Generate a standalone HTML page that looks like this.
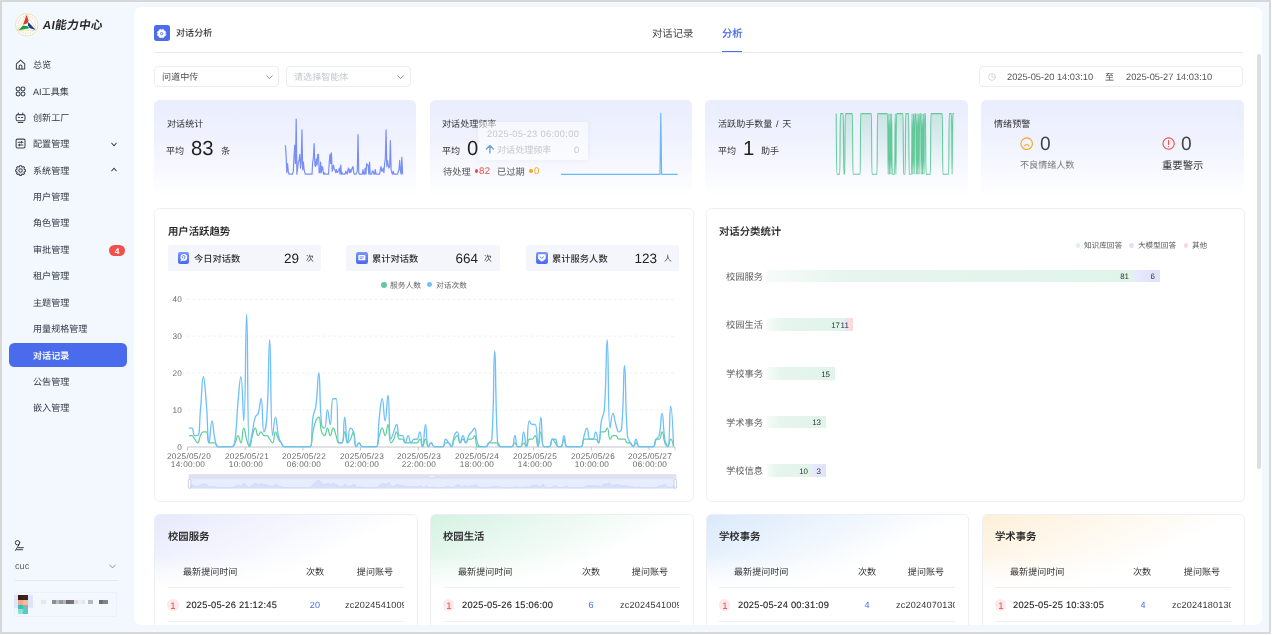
<!DOCTYPE html>
<html lang="zh-CN"><head><meta charset="utf-8"><title>AI能力中心 - 对话分析</title>
<style>
*{box-sizing:border-box;margin:0;padding:0}
html,body{width:1272px;height:635px;overflow:hidden;background:#f3f7fe}
body{font-family:"Liberation Sans","Noto Sans CJK SC",sans-serif;color:#333;position:relative}
.abs,.t{position:absolute}
.t{white-space:nowrap;line-height:20px;height:20px;font-size:9.275px;color:#333;transform:matrix(1,0.001,0,1,0,0)}
.cj{font-family:"Liberation Sans","Noto Sans CJK SC",sans-serif}
.b{font-weight:bold}
.sb{font-weight:500;-webkit-text-stroke:.1px currentColor}
.m{font-weight:500}
svg{position:absolute;overflow:visible}
</style></head>
<body>
<div id="app" style="position:absolute;left:0;top:0;width:1272px;height:635px;will-change:transform;transform:translateZ(0)">
<svg style="left:14.6px;top:12.9px" width="23.6" height="23.6" viewBox="0 0 48 48">
<circle cx="24" cy="24" r="22.8" fill="#fffefa" stroke="#ead9a0" stroke-width="1.6"/>
<circle cx="24" cy="24" r="17.8" fill="none" stroke="#c9c9cf" stroke-width="3" stroke-dasharray="1.5 2.3" opacity=".75"/>
<circle cx="24" cy="24" r="14.6" fill="#fffefa"/>
<path d="M24 2 L4.5 35.5 L43.5 35 Z" fill="none" stroke="#e6cf86" stroke-width="1.1"/>
<g transform="translate(24 24) scale(1.14) translate(-24 -25)">
<path d="M23.6 7.5 L17.2 25 L25.4 22.4 L27 17 Z" fill="#dc3a2b"/>
<path d="M26.6 20 L39.5 33.8 L29.4 31.2 L26 26 Z" fill="#123f93"/>
<path d="M9.5 34.6 L28.6 31.2 L25.5 27.4 L16.8 26.4 Z" fill="#1e9a3c"/>
</g>
</svg>
<div class="t cj" style="top:15.09px;font-size:11.638px;left:43.20px;font-weight:700;letter-spacing:.3px;transform:matrix(1,0.001,-0.17,1,0,0);color:#2b2b2b;">AI能力中心</div>
<svg style="left:14.9px;top:59.35px" width="11.1" height="11.1" viewBox="0 0 16 16" fill="none" stroke="#3d4452" stroke-width="1.5" stroke-linecap="round" stroke-linejoin="round"><path d="M2 6.9 L8 1.5 L14 6.9 V14.3 H2 Z"/><path d="M6 14.3 V10.6 a2 2 0 0 1 4 0 V14.3"/></svg>
<svg style="left:14.9px;top:85.55px" width="11.1" height="11.1" viewBox="0 0 16 16" fill="none" stroke="#3d4452" stroke-width="1.5" stroke-linecap="round" stroke-linejoin="round"><circle cx="4.5" cy="4.4" r="2.85"/><circle cx="11.5" cy="4.4" r="2.85"/><circle cx="4.5" cy="11.6" r="2.85"/><circle cx="11.5" cy="11.6" r="2.85"/></svg>
<svg style="left:14.9px;top:112.15px" width="11.1" height="11.1" viewBox="0 0 16 16" fill="none" stroke="#3d4452" stroke-width="1.5" stroke-linecap="round" stroke-linejoin="round"><rect x="1.6" y="3.8" width="12.8" height="8.8" rx="2.2"/><path d="M4.8 1.4 V3.6 M11.2 1.4 V3.6 M4.6 15 H11.4 M4.9 7.9 H6.7 M9.3 7.9 H11.1"/></svg>
<svg style="left:14.9px;top:138.45px" width="11.1" height="11.1" viewBox="0 0 16 16" fill="none" stroke="#3d4452" stroke-width="1.5" stroke-linecap="round" stroke-linejoin="round"><rect x="1.6" y="1.6" width="12.8" height="12.8" rx="1.8"/><path d="M4.6 6 H11.4 M4.6 10 H11.4" /><path d="M9.4 4.7 V7.3 M6.6 8.7 V11.3"/></svg>
<svg style="left:14.9px;top:164.55px" width="11.1" height="11.1" viewBox="0 0 16 16" fill="none" stroke="#3d4452" stroke-width="1.5" stroke-linecap="round" stroke-linejoin="round"><path d="M14.99 6.77 L14.99 9.23 L13.36 9.64 L12.94 10.63 L13.82 12.07 L12.07 13.82 L10.63 12.94 L9.64 13.36 L9.23 14.99 L6.77 14.99 L6.36 13.36 L5.37 12.94 L3.93 13.82 L2.18 12.07 L3.06 10.63 L2.64 9.64 L1.01 9.23 L1.01 6.77 L2.64 6.36 L3.06 5.37 L2.18 3.93 L3.93 2.18 L5.37 3.06 L6.36 2.64 L6.77 1.01 L9.23 1.01 L9.64 2.64 L10.63 3.06 L12.07 2.18 L13.82 3.93 L12.94 5.37 L13.36 6.36 Z" stroke-width="1.5"/><circle cx="8" cy="8" r="2.5" stroke-width="1.5"/></svg>
<div class="t cj" style="top:55.10px;font-size:9.071px;left:32.80px;color:#333a46;">总览</div>
<div class="t cj" style="top:81.63px;font-size:9.071px;left:32.80px;color:#333a46;">AI工具集</div>
<div class="t cj" style="top:107.88px;font-size:9.071px;left:32.80px;color:#333a46;">创新工厂</div>
<div class="t cj" style="top:134.42px;font-size:9.071px;left:32.80px;color:#333a46;">配置管理</div>
<div class="t cj" style="top:160.57px;font-size:9.071px;left:32.80px;color:#333a46;">系统管理</div>
<svg style="left:111.3px;top:141.6px" width="6" height="5" viewBox="0 0 12 10" fill="none" stroke="#333" stroke-width="2.1" stroke-linecap="round" stroke-linejoin="round"><path d="M1.5 2.5 L6 7.5 L10.5 2.5"/></svg>
<svg style="left:111.3px;top:167.4px" width="6" height="5" viewBox="0 0 12 10" fill="none" stroke="#333" stroke-width="2.1" stroke-linecap="round" stroke-linejoin="round"><path d="M1.5 7.5 L6 2.5 L10.5 7.5"/></svg>
<div class="abs" style="left:8.50px;top:342.90px;width:118.80px;height:24.20px;background:#4a6cec;border-radius:5.3px"></div>
<div class="t cj" style="top:186.99px;font-size:9.071px;left:32.80px;color:#333a46;">用户管理</div>
<div class="t cj" style="top:213.41px;font-size:9.071px;left:32.80px;color:#333a46;">角色管理</div>
<div class="t cj" style="top:239.86px;font-size:9.071px;left:32.80px;color:#333a46;">审批管理</div>
<div class="t cj" style="top:266.22px;font-size:9.071px;left:32.80px;color:#333a46;">租户管理</div>
<div class="t cj" style="top:292.67px;font-size:9.071px;left:32.80px;color:#333a46;">主题管理</div>
<div class="t cj" style="top:319.05px;font-size:9.071px;left:32.80px;color:#333a46;">用量规格管理</div>
<div class="t cj sb" style="top:345.52px;font-size:9.071px;left:32.80px;color:#fff;">对话记录</div>
<div class="t cj" style="top:371.85px;font-size:9.071px;left:32.80px;color:#333a46;">公告管理</div>
<div class="t cj" style="top:398.24px;font-size:9.071px;left:32.80px;color:#333a46;">嵌入管理</div>
<div class="abs" style="left:109.00px;top:245.30px;width:16.40px;height:10.70px;background:#f0514a;border-radius:5.4px"></div>
<div class="t b" style="top:240.70px;font-size:8.400px;left:17.20px;width:200px;text-align:center;color:#fff;">4</div>
<svg style="left:0;top:0" width="140" height="635" fill="none" stroke="#333" stroke-width="0.95" stroke-linecap="round"><circle cx="17.5" cy="542.7" r="2.2"/><path d="M19.1 544.5 L15.5 550.4 M18.4 547.7 H23.4 M16.8 549.7 H22.6"/></svg>
<div class="t " style="top:556.19px;font-size:9.200px;left:15.30px;color:#666;">cuc</div>
<svg style="left:109px;top:564.2px" width="7" height="5" viewBox="0 0 14 10" fill="none" stroke="#777" stroke-width="1.5" stroke-linecap="round" stroke-linejoin="round"><path d="M1.5 2 L7 8 L12.5 2"/></svg>
<div class="abs" style="left:15.20px;top:580.20px;width:103.00px;height:0.70px;background:#e3e7f0"></div>
<div class="abs" style="left:14.00px;top:592.20px;width:103.30px;height:24.40px;border:0.9px solid #edf1fa;border-radius:2px"></div>
<div class="abs" style="left:14.00px;top:595.20px;width:19.00px;height:13.00px;background:#dfe5fb"></div>
<div class="abs" style="left:17.90px;top:595.20px;width:5.10px;height:4.75px;background:#3a1d15"></div>
<div class="abs" style="left:22.90px;top:595.20px;width:5.10px;height:4.75px;background:#43211a"></div>
<div class="abs" style="left:17.90px;top:599.85px;width:5.10px;height:4.75px;background:#f0a58c"></div>
<div class="abs" style="left:22.90px;top:599.85px;width:5.10px;height:4.75px;background:#f6b9a0"></div>
<div class="abs" style="left:17.90px;top:604.50px;width:5.10px;height:4.75px;background:#2ec4bd"></div>
<div class="abs" style="left:22.90px;top:604.50px;width:5.10px;height:4.75px;background:#8fb5a2"></div>
<div class="abs" style="left:17.90px;top:609.15px;width:5.10px;height:4.75px;background:#93ddd8"></div>
<div class="abs" style="left:22.90px;top:609.15px;width:5.10px;height:4.75px;background:#4dcfc8"></div>
<div class="abs" style="left:41.00px;top:600.00px;width:5.00px;height:4.20px;background:#e6e8ee"></div>
<div class="abs" style="left:52.00px;top:600.00px;width:3.50px;height:4.20px;background:#8e8e90"></div>
<div class="abs" style="left:55.50px;top:600.00px;width:3.50px;height:4.20px;background:#b9b9bb"></div>
<div class="abs" style="left:59.00px;top:600.00px;width:3.50px;height:4.20px;background:#9a9a9c"></div>
<div class="abs" style="left:62.50px;top:600.00px;width:3.00px;height:4.20px;background:#b5b5b7"></div>
<div class="abs" style="left:65.50px;top:600.00px;width:4.50px;height:4.20px;background:#6e6e70"></div>
<div class="abs" style="left:70.00px;top:600.00px;width:3.50px;height:4.20px;background:#77777a"></div>
<div class="abs" style="left:73.50px;top:600.00px;width:4.00px;height:4.20px;background:#dcdde2"></div>
<div class="abs" style="left:78.00px;top:600.00px;width:4.00px;height:4.20px;background:#eceef3"></div>
<div class="abs" style="left:82.00px;top:600.00px;width:3.00px;height:4.20px;background:#e3e5ea"></div>
<div class="abs" style="left:88.00px;top:600.00px;width:5.00px;height:4.20px;background:#b8b9bd"></div>
<div class="abs" style="left:98.50px;top:600.00px;width:4.00px;height:4.20px;background:#6f6f72"></div>
<div class="abs" style="left:102.50px;top:600.00px;width:5.00px;height:4.20px;background:#858588"></div>
<div class="abs" style="left:133.60px;top:6.60px;width:1128.40px;height:618.50px;background:#fff;border-radius:7px"></div>
<div class="abs" style="left:153.90px;top:25.00px;width:15.80px;height:15.80px;background:#4c6cec;border-radius:2.7px"></div>
<svg style="left:157.1px;top:28.9px" width="9.2" height="9.2" viewBox="0 0 16 16"><path d="M15.35 9.50 L14.25 12.14 L13.02 12.13 L12.13 13.02 L12.14 14.25 L9.50 15.35 L8.62 14.47 L7.38 14.47 L6.50 15.35 L3.86 14.25 L3.87 13.02 L2.98 12.13 L1.75 12.14 L0.65 9.50 L1.53 8.62 L1.53 7.38 L0.65 6.50 L1.75 3.86 L2.98 3.87 L3.87 2.98 L3.86 1.75 L6.50 0.65 L7.38 1.53 L8.62 1.53 L9.50 0.65 L12.14 1.75 L12.13 2.98 L13.02 3.87 L14.25 3.86 L15.35 6.50 L14.47 7.38 L14.47 8.62 Z" fill="#fff" stroke="#fff" stroke-width="1.2" stroke-linejoin="round"/><circle cx="8" cy="8" r="2.1" fill="none" stroke="#4c6cec" stroke-width="1.5"/></svg>
<div class="t cj m" style="top:23.36px;font-size:9.071px;left:176.15px;color:#333;">对话分析</div>
<div class="t cj" style="top:23.74px;font-size:10.367px;left:651.99px;color:#444;">对话记录</div>
<div class="t cj sb" style="top:24.02px;font-size:10.367px;left:721.69px;color:#4c6cec;">分析</div>
<div class="abs" style="left:721.60px;top:51.40px;width:20.60px;height:1.40px;background:#4c6cec"></div>
<div class="abs" style="left:153.80px;top:52.00px;width:1089.00px;height:0.90px;background:#e8eaef"></div>
<div class="abs" style="left:154.20px;top:66.40px;width:124.40px;height:20.20px;border:0.8px solid #ecedf1;border-radius:4px;background:#fff"></div>
<div class="t cj" style="top:66.92px;font-size:9.071px;left:162.43px;color:#4c4c4c;">问道中传</div>
<svg style="left:265.6px;top:74.6px" width="7" height="4.6" viewBox="0 0 14 9" fill="none" stroke="#74777f" stroke-width="1.7" stroke-linecap="round" stroke-linejoin="round"><path d="M1.5 1.5 L7 7.2 L12.5 1.5"/></svg>
<div class="abs" style="left:285.80px;top:66.40px;width:124.80px;height:20.20px;border:0.8px solid #ecedf1;border-radius:4px;background:#fff"></div>
<div class="t cj" style="top:66.84px;font-size:9.071px;left:293.79px;color:#c4c7ce;">请选择智能体</div>
<svg style="left:397.4px;top:74.6px" width="7" height="4.6" viewBox="0 0 14 9" fill="none" stroke="#74777f" stroke-width="1.7" stroke-linecap="round" stroke-linejoin="round"><path d="M1.5 1.5 L7 7.2 L12.5 1.5"/></svg>
<div class="abs" style="left:979.00px;top:66.20px;width:264.40px;height:20.40px;border:0.8px solid #ecedf1;border-radius:4px;background:#fff"></div>
<svg style="left:987.6px;top:72.8px" width="8" height="8" viewBox="0 0 16 16" fill="none" stroke="#c3c6cd" stroke-width="1.4" stroke-linecap="round"><circle cx="8" cy="8" r="6.8"/><path d="M8 4.2 V8.2 H11"/></svg>
<div class="t " style="top:67.21px;font-size:9.275px;left:1006.74px;color:#555;">2025-05-20 14:03:10</div>
<div class="t cj" style="top:66.60px;font-size:9.071px;left:1104.66px;color:#444;">至</div>
<div class="t " style="top:67.22px;font-size:9.275px;left:1125.74px;color:#555;">2025-05-27 14:03:10</div>
<div class="abs" style="left:153.90px;top:100.00px;width:262.60px;height:96.00px;background:linear-gradient(180deg,#e9edfd 0%,#eff2fe 38%,#f8f9ff 74%,#ffffff 100%);border-radius:5.3px"></div>
<div class="abs" style="left:429.60px;top:100.00px;width:262.60px;height:96.00px;background:linear-gradient(180deg,#e9edfd 0%,#eff2fe 38%,#f8f9ff 74%,#ffffff 100%);border-radius:5.3px"></div>
<div class="abs" style="left:705.40px;top:100.00px;width:262.60px;height:96.00px;background:linear-gradient(180deg,#e9edfd 0%,#eff2fe 38%,#f8f9ff 74%,#ffffff 100%);border-radius:5.3px"></div>
<div class="abs" style="left:981.20px;top:100.00px;width:262.60px;height:96.00px;background:linear-gradient(180deg,#e9edfd 0%,#eff2fe 38%,#f8f9ff 74%,#ffffff 100%);border-radius:5.3px"></div>
<div class="t cj" style="top:114.04px;font-size:9.071px;left:166.65px;color:#333;">对话统计</div>
<div class="t cj" style="top:140.70px;font-size:9.071px;left:166.47px;color:#333;">平均</div>
<div class="t " style="top:137.99px;font-size:20.300px;left:191.30px;letter-spacing:-.1px;color:#1f1f1f;">83</div>
<div class="t cj" style="top:140.96px;font-size:9.071px;left:220.51px;color:#333;">条</div>
<svg style="left:0;top:0" width="1272" height="635"><path d="M285.40 145.17L286.12 155.87L286.84 172.67L287.56 163.51L288.28 171.14L289.00 174.20L289.71 174.20L290.43 174.20L291.15 174.20L291.87 174.20L292.59 174.20L293.31 171.14L294.03 155.87L294.75 145.17L295.47 163.51L296.19 119.20L296.90 174.20L297.62 168.09L298.34 161.98L299.06 160.45L299.78 154.34L300.50 168.09L301.22 161.98L301.94 129.89L302.66 169.62L303.38 161.98L304.09 169.62L304.81 172.67L305.53 174.20L306.25 174.20L306.97 174.20L307.69 174.20L308.41 174.20L309.13 174.20L309.85 174.20L310.57 174.20L311.28 174.20L312.00 174.20L312.72 161.98L313.44 157.39L314.16 143.64L314.88 165.03L315.60 166.56L316.32 158.92L317.04 165.03L317.76 154.34L318.47 154.34L319.19 172.67L319.91 172.67L320.63 161.98L321.35 172.67L322.07 166.56L322.79 168.09L323.51 174.20L324.23 172.67L324.95 174.20L325.67 174.20L326.38 174.20L327.10 174.20L327.82 174.20L328.54 174.20L329.26 161.98L329.98 154.34L330.70 163.51L331.42 152.81L332.14 171.14L332.86 168.09L333.57 165.03L334.29 169.62L335.01 169.62L335.73 172.67L336.45 169.62L337.17 172.67L337.89 171.14L338.61 171.14L339.33 168.09L340.05 174.20L340.76 165.03L341.48 174.20L342.20 172.67L342.92 174.20L343.64 174.20L344.36 174.20L345.08 174.20L345.80 171.14L346.52 172.67L347.24 174.20L347.95 169.62L348.67 168.09L349.39 172.67L350.11 169.62L350.83 172.67L351.55 169.62L352.27 168.09L352.99 166.56L353.71 172.67L354.43 174.20L355.14 174.20L355.86 174.20L356.58 172.67L357.30 171.14L358.02 134.48L358.74 172.67L359.46 174.20L360.18 174.20L360.90 174.20L361.62 174.20L362.33 174.20L363.05 169.62L363.77 174.20L364.49 174.20L365.21 168.09L365.93 174.20L366.65 163.51L367.37 165.03L368.09 165.03L368.81 174.20L369.53 161.98L370.24 174.20L370.96 174.20L371.68 174.20L372.40 171.14L373.12 171.14L373.84 174.20L374.56 174.20L375.28 169.62L376.00 174.20L376.72 174.20L377.43 174.20L378.15 174.20L378.87 174.20L379.59 174.20L380.31 169.62L381.03 166.56L381.75 171.14L382.47 171.14L383.19 168.09L383.91 172.67L384.62 163.51L385.34 158.92L386.06 129.89L386.78 166.56L387.50 160.45L388.22 165.03L388.94 168.09L389.66 166.56L390.38 140.59L391.10 169.62L391.81 172.67L392.53 174.20L393.25 171.14L393.97 174.20L394.69 174.20L395.41 174.20L396.13 174.20L396.85 174.20L397.57 174.20L398.29 171.14L399.00 169.62L399.72 160.45L400.44 171.14L401.16 174.20L401.88 157.39L402.60 174.20" fill="none" stroke="#788ef5" stroke-width="1.2" stroke-linejoin="round"/></svg>
<div class="t cj" style="top:113.61px;font-size:9.071px;left:442.45px;color:#333;">对话处理频率</div>
<div class="t cj" style="top:140.70px;font-size:9.071px;left:442.27px;color:#333;">平均</div>
<div class="t " style="top:137.60px;font-size:20.300px;left:467.47px;color:#1f1f1f;">0</div>
<div class="t cj" style="top:161.52px;font-size:9.242px;left:442.64px;color:#555;">待处理</div>
<div class="abs" style="left:474.60px;top:169.20px;width:3.80px;height:3.80px;background:#ee4d48;border-radius:50%"></div>
<div class="t " style="top:161.47px;font-size:9.700px;left:479.40px;letter-spacing:.4px;color:#ee4d48;">82</div>
<div class="t cj" style="top:161.56px;font-size:9.242px;left:496.70px;color:#555;">已过期</div>
<div class="abs" style="left:529.20px;top:169.20px;width:3.80px;height:3.80px;background:#f5a623;border-radius:50%"></div>
<div class="t " style="top:161.48px;font-size:9.700px;left:533.80px;color:#f5a623;">0</div>
<svg style="left:0;top:0" width="1272" height="635"><path d="M561 174.3 H660 L660.8 113.4 L661.6 174.3 H677.6" fill="none" stroke="#6ab8f5" stroke-width="1.2" stroke-linejoin="round"/></svg>
<div class="abs" style="left:478.00px;top:122.00px;width:110.00px;height:38.00px;background:rgba(255,255,255,.5);border-radius:2.6px;box-shadow:0 0 5px rgba(170,180,215,.16)"></div>
<div class="t " style="top:123.83px;font-size:9.275px;left:487.34px;letter-spacing:.32px;color:#c6c8ce;">2025-05-23 06:00:00</div>
<svg style="left:485.2px;top:144.2px" width="9.8" height="9.8" viewBox="0 0 16 16" fill="none" stroke="#6fa3d6" stroke-width="2.3" stroke-linecap="round" stroke-linejoin="round"><path d="M8 14.5 V2.8 M2.4 8 L8 2.4 L13.6 8"/></svg>
<div class="t cj" style="top:139.61px;font-size:9.071px;left:497.15px;color:#c6c8ce;">对话处理频率</div>
<div class="t " style="top:139.83px;font-size:9.400px;left:574.00px;color:#c6c8ce;">0</div>
<div class="t cj" style="top:114.10px;font-size:9.071px;left:718.02px;word-spacing:1.2px;color:#333;">活跃助手数量 / 天</div>
<div class="t cj" style="top:140.80px;font-size:9.071px;left:717.97px;color:#333;">平均</div>
<div class="t " style="top:137.50px;font-size:20.300px;left:742.64px;color:#1f1f1f;">1</div>
<div class="t cj" style="top:141.23px;font-size:9.071px;left:760.57px;color:#333;">助手</div>
<svg style="left:0;top:0" width="1272" height="635"><defs><linearGradient id="g3" x1="0" y1="0" x2="0" y2="1"><stop offset="0" stop-color="#7fcfaa" stop-opacity=".32"/><stop offset="1" stop-color="#7fcfaa" stop-opacity="0"/></linearGradient></defs><path d="M836.20 113.60C836.20 113.60 836.42 174.30 836.90 174.30C836.91 174.30 837.36 174.30 837.60 174.30C837.85 174.30 838.06 174.30 838.31 174.30C838.55 174.30 838.76 174.30 839.01 174.30C839.26 174.30 839.71 174.30 839.71 174.30C840.20 174.30 839.93 113.60 840.41 113.60C840.42 113.60 840.87 113.60 841.12 113.60C841.36 113.60 841.57 113.60 841.82 113.60C842.06 113.60 842.28 113.60 842.52 113.60C842.77 113.60 843.22 113.60 843.22 113.60C843.71 113.60 843.44 174.30 843.93 174.30C843.93 174.30 844.62 174.30 844.63 174.30C845.11 174.30 844.84 113.60 845.33 113.60C845.34 113.60 845.79 113.60 846.03 113.60C846.28 113.60 846.49 113.60 846.74 113.60C846.98 113.60 847.19 113.60 847.44 113.60C847.68 113.60 847.89 113.60 848.14 113.60C848.39 113.60 848.60 113.60 848.84 113.60C849.09 113.60 849.30 113.60 849.55 113.60C849.79 113.60 850.00 113.60 850.25 113.60C850.49 113.60 850.70 113.60 850.95 113.60C851.20 113.60 851.41 113.60 851.65 113.60C851.90 113.60 852.35 113.60 852.35 113.60C852.84 113.60 852.57 174.30 853.06 174.30C853.06 174.30 853.51 174.30 853.76 174.30C854.01 174.30 854.22 174.30 854.46 174.30C854.71 174.30 854.92 174.30 855.16 174.30C855.41 174.30 855.62 174.30 855.87 174.30C856.11 174.30 856.32 174.30 856.57 174.30C856.81 174.30 857.03 174.30 857.27 174.30C857.52 174.30 857.73 174.30 857.97 174.30C858.22 174.30 858.43 174.30 858.68 174.30C858.92 174.30 859.13 174.30 859.38 174.30C859.62 174.30 860.08 174.30 860.08 174.30C860.57 174.30 860.30 113.60 860.78 113.60C860.79 113.60 861.24 113.60 861.49 113.60C861.73 113.60 861.94 113.60 862.19 113.60C862.43 113.60 862.64 113.60 862.89 113.60C863.14 113.60 863.35 113.60 863.59 113.60C863.84 113.60 864.05 113.60 864.30 113.60C864.54 113.60 864.75 113.60 865.00 113.60C865.24 113.60 865.45 113.60 865.70 113.60C865.95 113.60 866.16 113.60 866.40 113.60C866.65 113.60 866.86 113.60 867.10 113.60C867.35 113.60 867.56 113.60 867.81 113.60C868.05 113.60 868.26 113.60 868.51 113.60C868.76 113.60 868.97 113.60 869.21 113.60C869.46 113.60 869.67 113.60 869.91 113.60C870.16 113.60 870.37 113.60 870.62 113.60C870.86 113.60 871.31 113.60 871.32 113.60C871.81 113.60 871.54 174.30 872.02 174.30C872.03 174.30 872.48 174.30 872.72 174.30C872.97 174.30 873.18 174.30 873.43 174.30C873.67 174.30 873.88 174.30 874.13 174.30C874.37 174.30 874.59 174.30 874.83 174.30C875.08 174.30 875.29 174.30 875.53 174.30C875.78 174.30 875.99 174.30 876.24 174.30C876.48 174.30 876.93 174.30 876.94 174.30C877.42 174.30 877.15 113.60 877.64 113.60C877.65 113.60 878.10 113.60 878.34 113.60C878.59 113.60 878.80 113.60 879.05 113.60C879.29 113.60 879.50 113.60 879.75 113.60C879.99 113.60 880.20 113.60 880.45 113.60C880.70 113.60 880.91 113.60 881.15 113.60C881.40 113.60 881.61 113.60 881.85 113.60C882.10 113.60 882.31 113.60 882.56 113.60C882.80 113.60 883.01 113.60 883.26 113.60C883.51 113.60 883.72 113.60 883.96 113.60C884.21 113.60 884.42 113.60 884.66 113.60C884.91 113.60 885.12 113.60 885.37 113.60C885.61 113.60 885.82 113.60 886.07 113.60C886.31 113.60 886.53 113.60 886.77 113.60C887.02 113.60 887.47 113.60 887.47 113.60C887.96 113.60 887.93 174.30 888.18 174.30C888.42 174.30 888.63 113.60 888.88 113.60C889.12 113.60 889.34 174.30 889.58 174.30C889.83 174.30 890.04 113.60 890.28 113.60C890.53 113.60 890.74 174.30 890.99 174.30C891.23 174.30 891.44 113.60 891.69 113.60C891.93 113.60 891.90 174.30 892.39 174.30C892.40 174.30 892.85 174.30 893.09 174.30C893.34 174.30 893.55 174.30 893.80 174.30C894.04 174.30 894.49 174.30 894.50 174.30C894.98 174.30 894.95 113.60 895.20 113.60C895.45 113.60 895.66 174.30 895.90 174.30C896.15 174.30 896.12 113.60 896.60 113.60C896.61 113.60 897.06 113.60 897.31 113.60C897.55 113.60 897.76 113.60 898.01 113.60C898.26 113.60 898.47 113.60 898.71 113.60C898.96 113.60 899.17 113.60 899.41 113.60C899.66 113.60 899.87 113.60 900.12 113.60C900.36 113.60 900.57 113.60 900.82 113.60C901.06 113.60 901.28 113.60 901.52 113.60C901.77 113.60 901.98 113.60 902.22 113.60C902.47 113.60 902.92 113.60 902.93 113.60C903.41 113.60 903.14 174.30 903.63 174.30C903.63 174.30 904.09 174.30 904.33 174.30C904.58 174.30 905.03 174.30 905.03 174.30C905.52 174.30 905.25 113.60 905.74 113.60C905.74 113.60 906.19 113.60 906.44 113.60C906.68 113.60 906.89 113.60 907.14 113.60C907.39 113.60 907.60 113.60 907.84 113.60C908.09 113.60 908.54 113.60 908.55 113.60C909.03 113.60 908.76 174.30 909.25 174.30C909.25 174.30 909.70 174.30 909.95 174.30C910.20 174.30 910.41 174.30 910.65 174.30C910.90 174.30 911.35 174.30 911.35 174.30C911.84 174.30 911.81 113.60 912.06 113.60C912.30 113.60 912.51 174.30 912.76 174.30C913.01 174.30 913.22 113.60 913.46 113.60C913.71 113.60 913.92 174.30 914.16 174.30C914.41 174.30 914.38 113.60 914.87 113.60C914.87 113.60 915.56 113.60 915.57 113.60C916.06 113.60 916.03 174.30 916.27 174.30C916.52 174.30 916.73 113.60 916.97 113.60C917.22 113.60 917.43 174.30 917.68 174.30C917.92 174.30 918.13 113.60 918.38 113.60C918.62 113.60 918.84 174.30 919.08 174.30C919.33 174.30 919.30 113.60 919.78 113.60C919.79 113.60 920.48 113.60 920.49 113.60C920.97 113.60 920.94 174.30 921.19 174.30C921.43 174.30 921.64 113.60 921.89 113.60C922.14 113.60 922.35 174.30 922.59 174.30C922.84 174.30 923.05 113.60 923.30 113.60C923.54 113.60 923.75 174.30 924.00 174.30C924.24 174.30 924.21 113.60 924.70 113.60C924.71 113.60 925.40 113.60 925.40 113.60C925.89 113.60 925.62 174.30 926.10 174.30C926.11 174.30 926.56 174.30 926.81 174.30C927.05 174.30 927.26 174.30 927.51 174.30C927.76 174.30 927.97 174.30 928.21 174.30C928.46 174.30 928.67 174.30 928.91 174.30C929.16 174.30 929.37 174.30 929.62 174.30C929.86 174.30 930.31 174.30 930.32 174.30C930.81 174.30 930.54 113.60 931.02 113.60C931.03 113.60 931.48 113.60 931.72 113.60C931.97 113.60 932.18 113.60 932.43 113.60C932.67 113.60 932.88 113.60 933.13 113.60C933.37 113.60 933.59 113.60 933.83 113.60C934.08 113.60 934.29 113.60 934.53 113.60C934.78 113.60 934.99 113.60 935.24 113.60C935.48 113.60 935.69 113.60 935.94 113.60C936.18 113.60 936.39 113.60 936.64 113.60C936.89 113.60 937.10 113.60 937.34 113.60C937.59 113.60 937.80 113.60 938.05 113.60C938.29 113.60 938.50 113.60 938.75 113.60C938.99 113.60 939.20 113.60 939.45 113.60C939.70 113.60 939.91 113.60 940.15 113.60C940.40 113.60 940.61 113.60 940.85 113.60C941.10 113.60 941.31 113.60 941.56 113.60C941.80 113.60 942.25 113.60 942.26 113.60C942.75 113.60 942.48 174.30 942.96 174.30C942.97 174.30 943.42 174.30 943.66 174.30C943.91 174.30 944.12 174.30 944.37 174.30C944.61 174.30 944.82 174.30 945.07 174.30C945.31 174.30 945.53 174.30 945.77 174.30C946.02 174.30 946.23 174.30 946.47 174.30C946.72 174.30 946.93 174.30 947.18 174.30C947.42 174.30 947.63 174.30 947.88 174.30C948.12 174.30 948.58 174.30 948.58 174.30C949.07 174.30 948.80 113.60 949.28 113.60C949.29 113.60 949.74 113.60 949.99 113.60C950.23 113.60 950.44 113.60 950.69 113.60C950.93 113.60 951.38 113.60 951.39 113.60C951.88 113.60 951.85 174.30 952.09 174.30C952.34 174.30 952.31 113.60 952.80 113.60C952.80 113.60 953.25 113.60 953.50 113.60C953.74 113.60 954.20 113.60 954.20 113.60L954.20 174.3 L836.20 174.3Z" fill="url(#g3)"/><path d="M836.20 113.60C836.20 113.60 836.42 174.30 836.90 174.30C836.91 174.30 837.36 174.30 837.60 174.30C837.85 174.30 838.06 174.30 838.31 174.30C838.55 174.30 838.76 174.30 839.01 174.30C839.26 174.30 839.71 174.30 839.71 174.30C840.20 174.30 839.93 113.60 840.41 113.60C840.42 113.60 840.87 113.60 841.12 113.60C841.36 113.60 841.57 113.60 841.82 113.60C842.06 113.60 842.28 113.60 842.52 113.60C842.77 113.60 843.22 113.60 843.22 113.60C843.71 113.60 843.44 174.30 843.93 174.30C843.93 174.30 844.62 174.30 844.63 174.30C845.11 174.30 844.84 113.60 845.33 113.60C845.34 113.60 845.79 113.60 846.03 113.60C846.28 113.60 846.49 113.60 846.74 113.60C846.98 113.60 847.19 113.60 847.44 113.60C847.68 113.60 847.89 113.60 848.14 113.60C848.39 113.60 848.60 113.60 848.84 113.60C849.09 113.60 849.30 113.60 849.55 113.60C849.79 113.60 850.00 113.60 850.25 113.60C850.49 113.60 850.70 113.60 850.95 113.60C851.20 113.60 851.41 113.60 851.65 113.60C851.90 113.60 852.35 113.60 852.35 113.60C852.84 113.60 852.57 174.30 853.06 174.30C853.06 174.30 853.51 174.30 853.76 174.30C854.01 174.30 854.22 174.30 854.46 174.30C854.71 174.30 854.92 174.30 855.16 174.30C855.41 174.30 855.62 174.30 855.87 174.30C856.11 174.30 856.32 174.30 856.57 174.30C856.81 174.30 857.03 174.30 857.27 174.30C857.52 174.30 857.73 174.30 857.97 174.30C858.22 174.30 858.43 174.30 858.68 174.30C858.92 174.30 859.13 174.30 859.38 174.30C859.62 174.30 860.08 174.30 860.08 174.30C860.57 174.30 860.30 113.60 860.78 113.60C860.79 113.60 861.24 113.60 861.49 113.60C861.73 113.60 861.94 113.60 862.19 113.60C862.43 113.60 862.64 113.60 862.89 113.60C863.14 113.60 863.35 113.60 863.59 113.60C863.84 113.60 864.05 113.60 864.30 113.60C864.54 113.60 864.75 113.60 865.00 113.60C865.24 113.60 865.45 113.60 865.70 113.60C865.95 113.60 866.16 113.60 866.40 113.60C866.65 113.60 866.86 113.60 867.10 113.60C867.35 113.60 867.56 113.60 867.81 113.60C868.05 113.60 868.26 113.60 868.51 113.60C868.76 113.60 868.97 113.60 869.21 113.60C869.46 113.60 869.67 113.60 869.91 113.60C870.16 113.60 870.37 113.60 870.62 113.60C870.86 113.60 871.31 113.60 871.32 113.60C871.81 113.60 871.54 174.30 872.02 174.30C872.03 174.30 872.48 174.30 872.72 174.30C872.97 174.30 873.18 174.30 873.43 174.30C873.67 174.30 873.88 174.30 874.13 174.30C874.37 174.30 874.59 174.30 874.83 174.30C875.08 174.30 875.29 174.30 875.53 174.30C875.78 174.30 875.99 174.30 876.24 174.30C876.48 174.30 876.93 174.30 876.94 174.30C877.42 174.30 877.15 113.60 877.64 113.60C877.65 113.60 878.10 113.60 878.34 113.60C878.59 113.60 878.80 113.60 879.05 113.60C879.29 113.60 879.50 113.60 879.75 113.60C879.99 113.60 880.20 113.60 880.45 113.60C880.70 113.60 880.91 113.60 881.15 113.60C881.40 113.60 881.61 113.60 881.85 113.60C882.10 113.60 882.31 113.60 882.56 113.60C882.80 113.60 883.01 113.60 883.26 113.60C883.51 113.60 883.72 113.60 883.96 113.60C884.21 113.60 884.42 113.60 884.66 113.60C884.91 113.60 885.12 113.60 885.37 113.60C885.61 113.60 885.82 113.60 886.07 113.60C886.31 113.60 886.53 113.60 886.77 113.60C887.02 113.60 887.47 113.60 887.47 113.60C887.96 113.60 887.93 174.30 888.18 174.30C888.42 174.30 888.63 113.60 888.88 113.60C889.12 113.60 889.34 174.30 889.58 174.30C889.83 174.30 890.04 113.60 890.28 113.60C890.53 113.60 890.74 174.30 890.99 174.30C891.23 174.30 891.44 113.60 891.69 113.60C891.93 113.60 891.90 174.30 892.39 174.30C892.40 174.30 892.85 174.30 893.09 174.30C893.34 174.30 893.55 174.30 893.80 174.30C894.04 174.30 894.49 174.30 894.50 174.30C894.98 174.30 894.95 113.60 895.20 113.60C895.45 113.60 895.66 174.30 895.90 174.30C896.15 174.30 896.12 113.60 896.60 113.60C896.61 113.60 897.06 113.60 897.31 113.60C897.55 113.60 897.76 113.60 898.01 113.60C898.26 113.60 898.47 113.60 898.71 113.60C898.96 113.60 899.17 113.60 899.41 113.60C899.66 113.60 899.87 113.60 900.12 113.60C900.36 113.60 900.57 113.60 900.82 113.60C901.06 113.60 901.28 113.60 901.52 113.60C901.77 113.60 901.98 113.60 902.22 113.60C902.47 113.60 902.92 113.60 902.93 113.60C903.41 113.60 903.14 174.30 903.63 174.30C903.63 174.30 904.09 174.30 904.33 174.30C904.58 174.30 905.03 174.30 905.03 174.30C905.52 174.30 905.25 113.60 905.74 113.60C905.74 113.60 906.19 113.60 906.44 113.60C906.68 113.60 906.89 113.60 907.14 113.60C907.39 113.60 907.60 113.60 907.84 113.60C908.09 113.60 908.54 113.60 908.55 113.60C909.03 113.60 908.76 174.30 909.25 174.30C909.25 174.30 909.70 174.30 909.95 174.30C910.20 174.30 910.41 174.30 910.65 174.30C910.90 174.30 911.35 174.30 911.35 174.30C911.84 174.30 911.81 113.60 912.06 113.60C912.30 113.60 912.51 174.30 912.76 174.30C913.01 174.30 913.22 113.60 913.46 113.60C913.71 113.60 913.92 174.30 914.16 174.30C914.41 174.30 914.38 113.60 914.87 113.60C914.87 113.60 915.56 113.60 915.57 113.60C916.06 113.60 916.03 174.30 916.27 174.30C916.52 174.30 916.73 113.60 916.97 113.60C917.22 113.60 917.43 174.30 917.68 174.30C917.92 174.30 918.13 113.60 918.38 113.60C918.62 113.60 918.84 174.30 919.08 174.30C919.33 174.30 919.30 113.60 919.78 113.60C919.79 113.60 920.48 113.60 920.49 113.60C920.97 113.60 920.94 174.30 921.19 174.30C921.43 174.30 921.64 113.60 921.89 113.60C922.14 113.60 922.35 174.30 922.59 174.30C922.84 174.30 923.05 113.60 923.30 113.60C923.54 113.60 923.75 174.30 924.00 174.30C924.24 174.30 924.21 113.60 924.70 113.60C924.71 113.60 925.40 113.60 925.40 113.60C925.89 113.60 925.62 174.30 926.10 174.30C926.11 174.30 926.56 174.30 926.81 174.30C927.05 174.30 927.26 174.30 927.51 174.30C927.76 174.30 927.97 174.30 928.21 174.30C928.46 174.30 928.67 174.30 928.91 174.30C929.16 174.30 929.37 174.30 929.62 174.30C929.86 174.30 930.31 174.30 930.32 174.30C930.81 174.30 930.54 113.60 931.02 113.60C931.03 113.60 931.48 113.60 931.72 113.60C931.97 113.60 932.18 113.60 932.43 113.60C932.67 113.60 932.88 113.60 933.13 113.60C933.37 113.60 933.59 113.60 933.83 113.60C934.08 113.60 934.29 113.60 934.53 113.60C934.78 113.60 934.99 113.60 935.24 113.60C935.48 113.60 935.69 113.60 935.94 113.60C936.18 113.60 936.39 113.60 936.64 113.60C936.89 113.60 937.10 113.60 937.34 113.60C937.59 113.60 937.80 113.60 938.05 113.60C938.29 113.60 938.50 113.60 938.75 113.60C938.99 113.60 939.20 113.60 939.45 113.60C939.70 113.60 939.91 113.60 940.15 113.60C940.40 113.60 940.61 113.60 940.85 113.60C941.10 113.60 941.31 113.60 941.56 113.60C941.80 113.60 942.25 113.60 942.26 113.60C942.75 113.60 942.48 174.30 942.96 174.30C942.97 174.30 943.42 174.30 943.66 174.30C943.91 174.30 944.12 174.30 944.37 174.30C944.61 174.30 944.82 174.30 945.07 174.30C945.31 174.30 945.53 174.30 945.77 174.30C946.02 174.30 946.23 174.30 946.47 174.30C946.72 174.30 946.93 174.30 947.18 174.30C947.42 174.30 947.63 174.30 947.88 174.30C948.12 174.30 948.58 174.30 948.58 174.30C949.07 174.30 948.80 113.60 949.28 113.60C949.29 113.60 949.74 113.60 949.99 113.60C950.23 113.60 950.44 113.60 950.69 113.60C950.93 113.60 951.38 113.60 951.39 113.60C951.88 113.60 951.85 174.30 952.09 174.30C952.34 174.30 952.31 113.60 952.80 113.60C952.80 113.60 953.25 113.60 953.50 113.60C953.74 113.60 954.20 113.60 954.20 113.60" fill="none" stroke="#63c99a" stroke-width="1.05" stroke-linejoin="round"/></svg>
<div class="t cj" style="top:114.22px;font-size:9.071px;left:994.14px;color:#333;">情绪预警</div>
<svg style="left:1020px;top:137.1px" width="13.4" height="13.4" viewBox="0 0 20 20" fill="none" stroke="#f5a623" stroke-width="1.7" stroke-linecap="round"><circle cx="10" cy="10" r="8.6"/><path d="M7 13.6 a3.1 3.1 0 0 1 6 0"/></svg>
<div class="t " style="top:134.49px;font-size:19.200px;left:1039.80px;color:#444;">0</div>
<div class="t cj" style="top:154.60px;font-size:9.071px;left:1019.87px;color:#777;">不良情绪人数</div>
<svg style="left:1162.2px;top:137.2px" width="13.2" height="13.2" viewBox="0 0 20 20" fill="none" stroke="#f0524a" stroke-width="1.7" stroke-linecap="round"><circle cx="10" cy="10" r="8.6"/><path d="M10 5.2 V11.2 M10 14.4 V14.6"/></svg>
<div class="t " style="top:134.49px;font-size:19.200px;left:1181.30px;color:#444;">0</div>
<div class="t cj" style="top:156.34px;font-size:10.367px;left:1161.67px;color:#333;">重要警示</div>
<div class="abs" style="left:154.20px;top:208.00px;width:539.40px;height:293.60px;border:0.9px solid #eeeff2;border-radius:5.3px;background:#fff"></div>
<div class="t cj sb" style="top:221.79px;font-size:10.367px;left:167.91px;color:#222;">用户活跃趋势</div>
<div class="abs" style="left:167.80px;top:244.80px;width:153.20px;height:26.10px;background:#f5f6fc;border-radius:2.6px"></div>
<div class="abs" style="left:177.50px;top:252.20px;width:11.70px;height:11.70px;background:linear-gradient(180deg,#7b97fa,#4a68ee);border-radius:2.2px"></div>
<svg style="left:177.50px;top:252.2px" width="11.7" height="11.7" viewBox="0 0 16 16"><circle cx="8" cy="7.4" r="4.6" fill="#fff"/><path d="M4.4 10.2 L3.4 13 L7 11.6Z" fill="#fff"/><path d="M6 7.8 a2 2 0 1 1 3 .4 L8.2 9.6" fill="none" stroke="#5b7af2" stroke-width="1.3" stroke-linecap="round"/></svg>
<div class="t cj m" style="top:248.67px;font-size:9.291px;left:193.90px;color:#333;">今日对话数</div>
<div class="t " style="top:248.55px;font-size:13.500px;left:98.74px;width:200px;text-align:right;color:#222;">29</div>
<div class="t cj" style="top:249.15px;font-size:7.775px;left:305.71px;color:#444;">次</div>
<div class="abs" style="left:346.40px;top:244.80px;width:153.20px;height:26.10px;background:#f5f6fc;border-radius:2.6px"></div>
<div class="abs" style="left:356.10px;top:252.20px;width:11.70px;height:11.70px;background:linear-gradient(180deg,#7b97fa,#4a68ee);border-radius:2.2px"></div>
<svg style="left:356.10px;top:252.2px" width="11.7" height="11.7" viewBox="0 0 16 16"><rect x="3.2" y="4" width="9.6" height="7.4" rx="1.6" fill="#fff"/><path d="M5.6 6.7 H10.4 M5.6 8.8 H8.6" stroke="#5b7af2" stroke-width="1.1" stroke-linecap="round"/></svg>
<div class="t cj m" style="top:248.69px;font-size:9.291px;left:372.10px;color:#333;">累计对话数</div>
<div class="t " style="top:248.50px;font-size:13.500px;left:277.69px;width:200px;text-align:right;color:#222;">664</div>
<div class="t cj" style="top:249.15px;font-size:7.775px;left:484.31px;color:#444;">次</div>
<div class="abs" style="left:526.20px;top:244.80px;width:153.20px;height:26.10px;background:#f5f6fc;border-radius:2.6px"></div>
<div class="abs" style="left:535.90px;top:252.20px;width:11.70px;height:11.70px;background:linear-gradient(180deg,#7b97fa,#4a68ee);border-radius:2.2px"></div>
<svg style="left:535.90px;top:252.2px" width="11.7" height="11.7" viewBox="0 0 16 16"><path d="M3.4 3.6 H12.6 V9.4 L8 12.8 L3.4 9.4Z" fill="#fff" stroke="#fff" stroke-width="1" stroke-linejoin="round"/><path d="M5.6 6.6 L8 8.8 L10.4 6.6" fill="none" stroke="#5b7af2" stroke-width="1.3" stroke-linecap="round" stroke-linejoin="round"/></svg>
<div class="t cj m" style="top:248.69px;font-size:9.291px;left:551.90px;color:#333;">累计服务人数</div>
<div class="t " style="top:248.52px;font-size:13.500px;left:457.33px;width:200px;text-align:right;color:#222;">123</div>
<div class="t cj" style="top:249.31px;font-size:7.775px;left:663.74px;color:#444;">人</div>
<div class="abs" style="left:380.80px;top:281.80px;width:5.90px;height:5.90px;background:#63c99a;border-radius:50%"></div>
<div class="t cj" style="top:275.71px;font-size:7.726px;left:390.20px;color:#666;">服务人数</div>
<div class="abs" style="left:427.40px;top:282.40px;width:4.80px;height:4.80px;background:#6ec0fa;border-radius:50%"></div>
<div class="t cj" style="top:275.63px;font-size:7.726px;left:435.53px;color:#666;">对话次数</div>
<div class="t " style="top:437.70px;font-size:8.250px;left:-18.10px;width:200px;text-align:right;letter-spacing:.2px;color:#6a6a6a;">0</div>
<div class="t " style="top:400.86px;font-size:8.250px;left:-18.10px;width:200px;text-align:right;letter-spacing:.2px;color:#6a6a6a;">10</div>
<div class="t " style="top:364.03px;font-size:8.250px;left:-18.10px;width:200px;text-align:right;letter-spacing:.2px;color:#6a6a6a;">20</div>
<div class="t " style="top:327.21px;font-size:8.250px;left:-18.10px;width:200px;text-align:right;letter-spacing:.2px;color:#6a6a6a;">30</div>
<div class="t " style="top:290.40px;font-size:8.250px;left:-18.10px;width:200px;text-align:right;letter-spacing:.2px;color:#6a6a6a;">40</div>
<svg style="left:0;top:0" width="1272" height="635"><path d="M187.5 409.78 H675.0" stroke="#e9eaee" stroke-width="0.7" stroke-dasharray="2.6 2.6" fill="none"/><path d="M187.5 372.95 H675.0" stroke="#e9eaee" stroke-width="0.7" stroke-dasharray="2.6 2.6" fill="none"/><path d="M187.5 336.12 H675.0" stroke="#e9eaee" stroke-width="0.7" stroke-dasharray="2.6 2.6" fill="none"/><path d="M187.5 299.30 H675.0" stroke="#e9eaee" stroke-width="0.7" stroke-dasharray="2.6 2.6" fill="none"/><path d="M187.5 447.00 H675.0" stroke="#c2c5ca" stroke-width="1" fill="none"/><path d="M187.50 447.00 v3.3" stroke="#c2c5ca" stroke-width="1" fill="none"/><path d="M245.19 447.00 v3.3" stroke="#c2c5ca" stroke-width="1" fill="none"/><path d="M302.88 447.00 v3.3" stroke="#c2c5ca" stroke-width="1" fill="none"/><path d="M360.58 447.00 v3.3" stroke="#c2c5ca" stroke-width="1" fill="none"/><path d="M418.27 447.00 v3.3" stroke="#c2c5ca" stroke-width="1" fill="none"/><path d="M475.96 447.00 v3.3" stroke="#c2c5ca" stroke-width="1" fill="none"/><path d="M533.65 447.00 v3.3" stroke="#c2c5ca" stroke-width="1" fill="none"/><path d="M591.35 447.00 v3.3" stroke="#c2c5ca" stroke-width="1" fill="none"/><path d="M649.04 447.00 v3.3" stroke="#c2c5ca" stroke-width="1" fill="none"/><path d="M675.0 447.00 v3.3" stroke="#c2c5ca" stroke-width="1" fill="none"/><path d="M188.94 435.55C188.94 435.55 190.73 435.55 191.83 435.55C193.61 435.55 193.27 437.39 194.71 439.24C196.15 441.08 196.52 442.92 197.60 442.92C199.41 442.92 198.67 439.02 200.48 435.55C201.55 433.50 201.58 431.87 203.37 431.87C204.47 431.87 205.67 431.87 206.25 431.87C208.55 431.87 206.83 442.92 209.13 442.92C209.72 442.92 210.58 442.92 212.02 442.92C213.46 442.92 213.80 442.92 214.90 442.92C216.69 442.92 216.00 446.60 217.79 446.60C218.89 446.60 219.23 446.60 220.67 446.60C222.12 446.60 222.12 446.60 223.56 446.60C225.00 446.60 225.00 446.60 226.44 446.60C227.88 446.60 227.88 446.60 229.33 446.60C230.77 446.60 231.11 446.60 232.21 446.60C234.00 446.60 234.02 444.97 235.10 442.92C236.91 439.45 236.54 435.55 237.98 435.55C239.42 435.55 239.87 442.92 240.87 442.92C242.75 442.92 242.11 428.19 243.75 428.19C245.00 428.19 244.93 433.80 246.63 439.24C247.82 443.00 248.34 446.60 249.52 446.60C251.22 446.60 250.70 440.99 252.40 435.55C253.58 431.78 253.85 428.19 255.29 428.19C256.73 428.19 256.36 435.55 258.17 435.55C259.25 435.55 259.62 431.87 261.06 431.87C262.50 431.87 262.16 435.55 263.94 435.55C265.04 435.55 265.73 435.55 266.83 435.55C268.61 435.55 268.27 437.39 269.71 439.24C271.15 441.08 271.76 442.92 272.60 442.92C274.64 442.92 273.78 431.87 275.48 431.87C276.66 431.87 276.55 435.76 278.37 439.24C279.44 441.29 279.81 441.08 281.25 442.92C282.69 444.76 282.35 446.60 284.13 446.60C285.23 446.60 285.58 446.60 287.02 446.60C288.46 446.60 288.46 446.60 289.90 446.60C291.35 446.60 291.35 446.60 292.79 446.60C294.23 446.60 294.23 446.60 295.67 446.60C297.12 446.60 297.12 446.60 298.56 446.60C300.00 446.60 300.00 446.60 301.44 446.60C302.88 446.60 302.88 446.60 304.33 446.60C305.77 446.60 305.77 446.60 307.21 446.60C308.65 446.60 309.63 446.60 310.10 446.60C312.52 446.60 311.34 439.19 312.98 431.87C314.23 426.30 313.82 426.05 315.87 420.82C316.70 418.68 318.06 417.14 318.75 417.14C320.95 417.14 319.44 424.85 321.63 431.87C322.32 434.06 323.45 435.55 324.52 435.55C326.33 435.55 325.96 428.19 327.40 428.19C328.85 428.19 328.85 435.55 330.29 435.55C331.73 435.55 331.73 428.19 333.17 428.19C334.62 428.19 334.62 431.87 336.06 435.55C337.50 439.24 336.83 442.92 338.94 442.92C339.71 442.92 341.25 442.92 341.83 442.92C344.13 442.92 343.27 431.87 344.71 431.87C346.15 431.87 345.55 442.92 347.60 442.92C348.43 442.92 349.41 441.29 350.48 439.24C352.29 435.76 352.37 431.87 353.37 431.87C355.25 431.87 354.05 446.60 356.25 446.60C356.94 446.60 357.69 442.92 359.13 442.92C360.58 442.92 360.23 446.60 362.02 446.60C363.12 446.60 363.46 446.60 364.90 446.60C366.35 446.60 366.35 446.60 367.79 446.60C369.23 446.60 369.23 446.60 370.67 446.60C372.12 446.60 372.12 446.60 373.56 446.60C375.00 446.60 375.86 446.60 376.44 446.60C378.75 446.60 377.62 440.99 379.33 435.55C380.51 431.78 380.77 428.19 382.21 428.19C383.65 428.19 383.92 435.55 385.10 435.55C386.80 435.55 386.88 424.50 387.98 424.50C389.77 424.50 388.56 442.92 390.87 442.92C391.44 442.92 392.68 441.29 393.75 439.24C395.56 435.76 395.19 431.87 396.63 431.87C398.08 431.87 397.41 439.24 399.52 439.24C400.29 439.24 401.30 439.24 402.40 439.24C404.19 439.24 403.50 442.92 405.29 442.92C406.39 442.92 406.73 442.92 408.17 442.92C409.62 442.92 409.62 442.92 411.06 442.92C412.50 442.92 412.50 442.92 413.94 442.92C415.38 442.92 415.73 442.92 416.83 442.92C418.61 442.92 418.64 439.24 419.71 439.24C421.52 439.24 421.15 446.60 422.60 446.60C424.04 446.60 424.04 439.24 425.48 439.24C426.92 439.24 426.55 446.60 428.37 446.60C429.44 446.60 429.81 442.92 431.25 442.92C432.69 442.92 432.35 446.60 434.13 446.60C435.23 446.60 435.58 446.60 437.02 446.60C438.46 446.60 438.46 446.60 439.90 446.60C441.35 446.60 441.69 446.60 442.79 446.60C444.57 446.60 443.89 442.92 445.67 442.92C446.77 442.92 447.46 442.92 448.56 442.92C450.34 442.92 450.37 446.60 451.44 446.60C453.25 446.60 452.51 442.71 454.33 439.24C455.40 437.18 456.14 435.55 457.21 435.55C459.02 435.55 458.28 442.92 460.10 442.92C461.17 442.92 461.54 439.24 462.98 439.24C464.42 439.24 464.42 442.92 465.87 442.92C467.31 442.92 466.97 439.24 468.75 439.24C469.85 439.24 470.53 439.24 471.63 439.24C473.42 439.24 473.68 435.55 474.52 435.55C476.57 435.55 475.10 446.60 477.40 446.60C477.99 446.60 478.85 446.60 480.29 446.60C481.73 446.60 481.73 446.60 483.17 446.60C484.62 446.60 484.96 446.60 486.06 446.60C487.84 446.60 487.16 442.92 488.94 442.92C490.04 442.92 490.38 442.92 491.83 442.92C493.27 442.92 493.27 442.92 494.71 442.92C496.15 442.92 496.50 442.92 497.60 442.92C499.38 442.92 498.70 446.60 500.48 446.60C501.58 446.60 501.92 446.60 503.37 446.60C504.81 446.60 504.81 446.60 506.25 446.60C507.69 446.60 507.69 446.60 509.13 446.60C510.58 446.60 510.92 446.60 512.02 446.60C513.80 446.60 513.46 442.92 514.90 442.92C516.35 442.92 516.00 446.60 517.79 446.60C518.89 446.60 519.57 446.60 520.67 446.60C522.46 446.60 522.12 442.92 523.56 442.92C525.00 442.92 525.37 446.60 526.44 446.60C528.25 446.60 527.21 439.24 529.33 439.24C530.10 439.24 531.11 439.24 532.21 439.24C534.00 439.24 534.26 435.55 535.10 435.55C537.14 435.55 536.73 446.60 537.98 446.60C539.62 446.60 539.42 431.87 540.87 431.87C542.31 431.87 541.33 446.60 543.75 446.60C544.22 446.60 545.19 446.60 546.63 446.60C548.08 446.60 548.75 446.60 549.52 446.60C551.63 446.60 550.59 439.24 552.40 439.24C553.48 439.24 553.85 441.08 555.29 442.92C556.73 444.76 556.39 446.60 558.17 446.60C559.27 446.60 560.29 446.60 561.06 446.60C563.17 446.60 562.50 439.24 563.94 439.24C565.38 439.24 564.71 446.60 566.83 446.60C567.60 446.60 568.27 446.60 569.71 446.60C571.15 446.60 571.15 446.60 572.60 446.60C574.04 446.60 574.04 446.60 575.48 446.60C576.92 446.60 576.92 446.60 578.37 446.60C579.81 446.60 580.48 446.60 581.25 446.60C583.36 446.60 582.02 439.24 584.13 439.24C584.91 439.24 585.58 439.24 587.02 439.24C588.46 439.24 588.46 439.24 589.90 439.24C591.35 439.24 591.35 439.24 592.79 439.24C594.23 439.24 594.57 439.24 595.67 439.24C597.46 439.24 597.72 442.92 598.56 442.92C600.60 442.92 599.14 431.87 601.44 431.87C602.02 431.87 603.23 431.87 604.33 431.87C606.11 431.87 606.37 428.19 607.21 428.19C609.26 428.19 608.05 439.24 610.10 439.24C610.93 439.24 611.20 435.55 612.98 435.55C614.08 435.55 614.77 435.55 615.87 435.55C617.65 435.55 616.97 439.24 618.75 439.24C619.85 439.24 620.19 439.24 621.63 439.24C623.08 439.24 623.42 439.24 624.52 439.24C626.30 439.24 625.62 442.92 627.40 442.92C628.50 442.92 629.19 442.92 630.29 442.92C632.07 442.92 631.73 446.60 633.17 446.60C634.62 446.60 634.62 442.92 636.06 442.92C637.50 442.92 637.16 446.60 638.94 446.60C640.04 446.60 640.38 446.60 641.83 446.60C643.27 446.60 643.27 446.60 644.71 446.60C646.15 446.60 646.15 446.60 647.60 446.60C649.04 446.60 649.04 446.60 650.48 446.60C651.92 446.60 652.59 446.60 653.37 446.60C655.48 446.60 654.14 439.24 656.25 439.24C657.02 439.24 658.36 439.24 659.13 439.24C661.25 439.24 660.84 431.87 662.02 431.87C663.72 431.87 662.86 437.69 664.90 442.92C665.74 445.06 666.72 446.60 667.79 446.60C669.60 446.60 669.23 439.24 670.67 439.24C672.12 439.24 673.56 446.60 673.56 446.60" fill="none" stroke="#5fcf98" stroke-width="1.25" stroke-linejoin="round"/><path d="M188.94 428.19C188.94 428.19 191.06 428.19 191.83 428.19C193.94 428.19 192.60 435.55 194.71 435.55C195.48 435.55 197.31 435.55 197.60 435.55C200.19 435.55 199.22 422.68 200.48 409.78C202.10 393.22 201.74 376.63 203.37 376.63C204.63 376.63 205.13 389.49 206.25 402.41C208.01 422.63 207.27 442.92 209.13 442.92C210.16 442.92 210.45 420.82 212.02 420.82C213.33 420.82 212.88 430.19 214.90 439.24C215.76 443.08 215.67 446.60 217.79 446.60C218.56 446.60 219.23 446.60 220.67 446.60C222.12 446.60 222.12 446.60 223.56 446.60C225.00 446.60 225.00 446.60 226.44 446.60C227.88 446.60 227.88 446.60 229.33 446.60C230.77 446.60 231.44 446.60 232.21 446.60C234.33 446.60 234.59 443.13 235.10 439.24C237.47 421.04 236.29 420.80 237.98 402.41C239.17 389.50 239.80 376.63 240.87 376.63C242.68 376.63 242.90 420.82 243.75 420.82C245.79 420.82 245.35 314.03 246.63 314.03C248.23 314.03 246.93 446.60 249.52 446.60C249.81 446.60 250.96 439.24 252.40 431.87C253.85 424.50 253.09 424.16 255.29 417.14C255.97 414.95 257.49 415.64 258.17 413.46C260.37 406.44 260.16 398.73 261.06 398.73C263.05 398.73 261.95 431.87 263.94 431.87C264.84 431.87 266.36 424.62 266.83 417.14C269.24 378.59 268.42 339.81 269.71 339.81C271.31 339.81 270.18 435.55 272.60 435.55C273.07 435.55 274.04 417.14 275.48 417.14C276.92 417.14 276.34 426.50 278.37 435.55C279.22 439.39 279.44 439.45 281.25 442.92C282.32 444.97 282.35 446.60 284.13 446.60C285.23 446.60 285.58 446.60 287.02 446.60C288.46 446.60 288.46 446.60 289.90 446.60C291.35 446.60 291.35 446.60 292.79 446.60C294.23 446.60 294.23 446.60 295.67 446.60C297.12 446.60 297.12 446.60 298.56 446.60C300.00 446.60 300.00 446.60 301.44 446.60C302.88 446.60 302.88 446.60 304.33 446.60C305.77 446.60 305.77 446.60 307.21 446.60C308.65 446.60 309.84 446.60 310.10 446.60C312.72 446.60 310.90 431.76 312.98 417.14C313.78 411.50 315.13 411.74 315.87 406.09C318.01 389.64 317.62 372.95 318.75 372.95C320.50 372.95 318.99 399.18 321.63 424.50C321.87 426.80 323.94 428.19 324.52 428.19C326.83 428.19 325.81 409.78 327.40 409.78C328.69 409.78 329.23 424.50 330.29 424.50C332.12 424.50 330.58 398.73 333.17 398.73C333.46 398.73 335.88 398.73 336.06 398.73C338.77 398.73 336.23 442.92 338.94 442.92C339.12 442.92 341.54 442.92 341.83 442.92C344.42 442.92 343.27 417.14 344.71 417.14C346.15 417.14 345.77 442.92 347.60 442.92C348.65 442.92 348.28 428.19 350.48 428.19C351.17 428.19 352.68 429.68 353.37 431.87C355.56 438.89 354.05 446.60 356.25 446.60C356.94 446.60 357.69 442.92 359.13 442.92C360.58 442.92 360.23 446.60 362.02 446.60C363.12 446.60 363.46 446.60 364.90 446.60C366.35 446.60 366.35 446.60 367.79 446.60C369.23 446.60 369.23 446.60 370.67 446.60C372.12 446.60 372.12 446.60 373.56 446.60C375.00 446.60 376.19 446.60 376.44 446.60C379.07 446.60 377.56 431.83 379.33 417.14C380.44 407.89 380.90 398.73 382.21 398.73C383.78 398.73 383.76 420.82 385.10 420.82C386.65 420.82 386.92 395.05 387.98 395.05C389.80 395.05 388.42 439.24 390.87 439.24C391.30 439.24 392.31 435.55 393.75 431.87C395.19 428.19 395.45 424.50 396.63 424.50C398.34 424.50 397.22 435.55 399.52 435.55C400.10 435.55 401.63 435.55 402.40 435.55C404.52 435.55 403.85 442.92 405.29 442.92C406.73 442.92 406.73 435.55 408.17 435.55C409.62 435.55 409.25 442.92 411.06 442.92C412.13 442.92 412.16 439.24 413.94 439.24C415.04 439.24 416.06 439.24 416.83 439.24C418.94 439.24 418.72 431.87 419.71 431.87C421.60 431.87 421.44 446.60 422.60 446.60C424.32 446.60 424.04 424.50 425.48 424.50C426.92 424.50 425.98 446.60 428.37 446.60C428.87 446.60 429.81 442.92 431.25 442.92C432.69 442.92 432.35 446.60 434.13 446.60C435.23 446.60 435.58 446.60 437.02 446.60C438.46 446.60 438.46 446.60 439.90 446.60C441.35 446.60 442.02 446.60 442.79 446.60C444.90 446.60 443.86 439.24 445.67 439.24C446.75 439.24 447.12 441.08 448.56 442.92C450.00 444.76 450.60 446.60 451.44 446.60C453.49 446.60 452.28 440.78 454.33 435.55C455.17 433.41 456.37 431.87 457.21 431.87C459.26 431.87 458.39 442.92 460.10 442.92C461.28 442.92 461.54 435.55 462.98 435.55C464.42 435.55 464.42 442.92 465.87 442.92C467.31 442.92 466.94 439.02 468.75 435.55C469.82 433.50 470.19 433.71 471.63 431.87C473.08 430.03 473.83 428.19 474.52 428.19C476.72 428.19 475.20 435.90 477.40 442.92C478.09 445.10 478.50 446.60 480.29 446.60C481.39 446.60 481.73 446.60 483.17 446.60C484.62 446.60 484.96 446.60 486.06 446.60C487.84 446.60 487.50 444.76 488.94 442.92C490.38 441.08 491.68 441.55 491.83 439.24C494.57 395.52 493.30 350.86 494.71 350.86C496.18 350.86 494.85 397.36 497.60 442.92C497.74 445.23 498.70 446.60 500.48 446.60C501.58 446.60 501.92 446.60 503.37 446.60C504.81 446.60 504.81 446.60 506.25 446.60C507.69 446.60 507.69 446.60 509.13 446.60C510.58 446.60 511.44 446.60 512.02 446.60C514.32 446.60 513.46 435.55 514.90 435.55C516.35 435.55 515.49 446.60 517.79 446.60C518.37 446.60 520.21 446.60 520.67 446.60C523.09 446.60 522.12 431.87 523.56 431.87C525.00 431.87 525.38 446.60 526.44 446.60C528.27 446.60 526.88 420.82 529.33 420.82C529.77 420.82 530.43 424.50 532.21 424.50C533.31 424.50 534.77 424.50 535.10 424.50C537.65 424.50 536.74 446.60 537.98 446.60C539.63 446.60 539.42 417.14 540.87 417.14C542.31 417.14 541.12 446.60 543.75 446.60C544.01 446.60 545.19 446.60 546.63 446.60C548.08 446.60 548.75 446.60 549.52 446.60C551.63 446.60 550.29 439.24 552.40 439.24C553.17 439.24 554.52 439.24 555.29 439.24C557.40 439.24 556.06 446.60 558.17 446.60C558.94 446.60 560.48 446.60 561.06 446.60C563.36 446.60 562.50 435.55 563.94 435.55C565.38 435.55 564.52 446.60 566.83 446.60C567.41 446.60 568.27 446.60 569.71 446.60C571.15 446.60 571.15 446.60 572.60 446.60C574.04 446.60 574.04 446.60 575.48 446.60C576.92 446.60 576.92 446.60 578.37 446.60C579.81 446.60 580.67 446.60 581.25 446.60C583.55 446.60 582.43 440.99 584.13 435.55C585.32 431.78 585.84 428.19 587.02 428.19C588.72 428.19 587.60 439.24 589.90 439.24C590.49 439.24 592.02 439.24 592.79 439.24C594.90 439.24 594.49 431.87 595.67 431.87C597.38 431.87 597.58 442.92 598.56 442.92C600.46 442.92 599.54 431.78 601.44 420.82C602.42 415.21 603.92 415.45 604.33 409.78C606.81 374.95 605.94 339.81 607.21 339.81C608.82 339.81 607.63 428.19 610.10 428.19C610.51 428.19 611.34 413.46 612.98 413.46C614.23 413.46 614.16 419.07 615.87 424.50C617.05 428.27 616.94 431.87 618.75 431.87C619.82 431.87 621.43 430.49 621.63 428.19C624.32 397.35 623.16 365.59 624.52 365.59C626.04 365.59 624.81 400.81 627.40 435.55C627.70 439.48 628.48 439.45 630.29 442.92C631.36 444.97 632.10 446.60 633.17 446.60C634.99 446.60 634.62 439.24 636.06 439.24C637.50 439.24 636.83 446.60 638.94 446.60C639.71 446.60 640.38 446.60 641.83 446.60C643.27 446.60 643.27 446.60 644.71 446.60C646.15 446.60 646.15 446.60 647.60 446.60C649.04 446.60 649.04 446.60 650.48 446.60C651.92 446.60 652.59 446.60 653.37 446.60C655.48 446.60 654.44 442.71 656.25 439.24C657.32 437.18 658.63 437.79 659.13 435.55C661.52 424.90 660.69 413.46 662.02 413.46C663.57 413.46 662.69 426.54 664.90 439.24C665.58 443.11 667.32 446.60 667.79 446.60C670.20 446.60 669.23 406.09 670.67 406.09C672.12 406.09 673.56 446.60 673.56 446.60" fill="none" stroke="#6ebffb" stroke-width="1.3" stroke-linejoin="round"/><rect x="188.6" y="474.2" width="487.70" height="14.20" fill="#e8edfd" rx="1"/><rect x="188.6" y="474.2" width="487.70" height="4.6" fill="#dde1f2" rx="1"/><path d="M188.60 484.87L191.50 484.87L194.41 485.78L197.31 486.69L200.21 484.87L203.11 483.96L206.02 483.96L208.92 486.69L211.82 486.69L214.73 486.69L217.63 487.60L220.53 487.60L223.44 487.60L226.34 487.60L229.24 487.60L232.14 487.60L235.05 486.69L237.95 484.87L240.85 486.69L243.76 483.05L246.66 485.78L249.56 487.60L252.47 484.87L255.37 483.05L258.27 484.87L261.17 483.96L264.08 484.87L266.98 484.87L269.88 485.78L272.79 486.69L275.69 483.96L278.59 485.78L281.50 486.69L284.40 487.60L287.30 487.60L290.20 487.60L293.11 487.60L296.01 487.60L298.91 487.60L301.82 487.60L304.72 487.60L307.62 487.60L310.52 487.60L313.43 483.96L316.33 481.23L319.23 480.32L322.14 483.96L325.04 484.87L327.94 483.05L330.85 484.87L333.75 483.05L336.65 484.87L339.55 486.69L342.46 486.69L345.36 483.96L348.26 486.69L351.17 485.78L354.07 483.96L356.97 487.60L359.88 486.69L362.78 487.60L365.68 487.60L368.58 487.60L371.49 487.60L374.39 487.60L377.29 487.60L380.20 484.87L383.10 483.05L386.00 484.87L388.91 482.14L391.81 486.69L394.71 485.78L397.61 483.96L400.52 485.78L403.42 485.78L406.32 486.69L409.23 486.69L412.13 486.69L415.03 486.69L417.94 486.69L420.84 485.78L423.74 487.60L426.64 485.78L429.55 487.60L432.45 486.69L435.35 487.60L438.26 487.60L441.16 487.60L444.06 487.60L446.96 486.69L449.87 486.69L452.77 487.60L455.67 485.78L458.58 484.87L461.48 486.69L464.38 485.78L467.29 486.69L470.19 485.78L473.09 485.78L475.99 484.87L478.90 487.60L481.80 487.60L484.70 487.60L487.61 487.60L490.51 486.69L493.41 486.69L496.32 486.69L499.22 486.69L502.12 487.60L505.02 487.60L507.93 487.60L510.83 487.60L513.73 487.60L516.64 486.69L519.54 487.60L522.44 487.60L525.35 486.69L528.25 487.60L531.15 485.78L534.05 485.78L536.96 484.87L539.86 487.60L542.76 483.96L545.67 487.60L548.57 487.60L551.47 487.60L554.37 485.78L557.28 486.69L560.18 487.60L563.08 487.60L565.99 485.78L568.89 487.60L571.79 487.60L574.70 487.60L577.60 487.60L580.50 487.60L583.40 487.60L586.31 485.78L589.21 485.78L592.11 485.78L595.02 485.78L597.92 485.78L600.82 486.69L603.73 483.96L606.63 483.96L609.53 483.05L612.43 485.78L615.34 484.87L618.24 484.87L621.14 485.78L624.05 485.78L626.95 485.78L629.85 486.69L632.76 486.69L635.66 487.60L638.56 486.69L641.46 487.60L644.37 487.60L647.27 487.60L650.17 487.60L653.08 487.60L655.98 487.60L658.88 485.78L661.79 485.78L664.69 483.96L667.59 486.69L670.49 487.60L673.40 485.78L676.30 487.60L676.3 488.4L188.6 488.4Z" fill="#d7e0fb"/><path d="M188.60 484.87L191.50 484.87L194.41 485.78L197.31 486.69L200.21 484.87L203.11 483.96L206.02 483.96L208.92 486.69L211.82 486.69L214.73 486.69L217.63 487.60L220.53 487.60L223.44 487.60L226.34 487.60L229.24 487.60L232.14 487.60L235.05 486.69L237.95 484.87L240.85 486.69L243.76 483.05L246.66 485.78L249.56 487.60L252.47 484.87L255.37 483.05L258.27 484.87L261.17 483.96L264.08 484.87L266.98 484.87L269.88 485.78L272.79 486.69L275.69 483.96L278.59 485.78L281.50 486.69L284.40 487.60L287.30 487.60L290.20 487.60L293.11 487.60L296.01 487.60L298.91 487.60L301.82 487.60L304.72 487.60L307.62 487.60L310.52 487.60L313.43 483.96L316.33 481.23L319.23 480.32L322.14 483.96L325.04 484.87L327.94 483.05L330.85 484.87L333.75 483.05L336.65 484.87L339.55 486.69L342.46 486.69L345.36 483.96L348.26 486.69L351.17 485.78L354.07 483.96L356.97 487.60L359.88 486.69L362.78 487.60L365.68 487.60L368.58 487.60L371.49 487.60L374.39 487.60L377.29 487.60L380.20 484.87L383.10 483.05L386.00 484.87L388.91 482.14L391.81 486.69L394.71 485.78L397.61 483.96L400.52 485.78L403.42 485.78L406.32 486.69L409.23 486.69L412.13 486.69L415.03 486.69L417.94 486.69L420.84 485.78L423.74 487.60L426.64 485.78L429.55 487.60L432.45 486.69L435.35 487.60L438.26 487.60L441.16 487.60L444.06 487.60L446.96 486.69L449.87 486.69L452.77 487.60L455.67 485.78L458.58 484.87L461.48 486.69L464.38 485.78L467.29 486.69L470.19 485.78L473.09 485.78L475.99 484.87L478.90 487.60L481.80 487.60L484.70 487.60L487.61 487.60L490.51 486.69L493.41 486.69L496.32 486.69L499.22 486.69L502.12 487.60L505.02 487.60L507.93 487.60L510.83 487.60L513.73 487.60L516.64 486.69L519.54 487.60L522.44 487.60L525.35 486.69L528.25 487.60L531.15 485.78L534.05 485.78L536.96 484.87L539.86 487.60L542.76 483.96L545.67 487.60L548.57 487.60L551.47 487.60L554.37 485.78L557.28 486.69L560.18 487.60L563.08 487.60L565.99 485.78L568.89 487.60L571.79 487.60L574.70 487.60L577.60 487.60L580.50 487.60L583.40 487.60L586.31 485.78L589.21 485.78L592.11 485.78L595.02 485.78L597.92 485.78L600.82 486.69L603.73 483.96L606.63 483.96L609.53 483.05L612.43 485.78L615.34 484.87L618.24 484.87L621.14 485.78L624.05 485.78L626.95 485.78L629.85 486.69L632.76 486.69L635.66 487.60L638.56 486.69L641.46 487.60L644.37 487.60L647.27 487.60L650.17 487.60L653.08 487.60L655.98 487.60L658.88 485.78L661.79 485.78L664.69 483.96L667.59 486.69L670.49 487.60L673.40 485.78L676.30 487.60" fill="none" stroke="#c3d0f5" stroke-width="0.5"/><rect x="188.30" y="479.4" width="2.5" height="8.8" rx="1.1" fill="#fff" stroke="#aab4d6" stroke-width="0.6"/><rect x="674.10" y="479.4" width="2.5" height="8.8" rx="1.1" fill="#fff" stroke="#aab4d6" stroke-width="0.6"/><path d="M430.6 476.5 h3" stroke="#f4f6ff" stroke-width="1" stroke-linecap="round"/></svg>
<div class="t " style="top:446.99px;font-size:8.250px;left:88.55px;width:200px;text-align:center;letter-spacing:.27px;color:#6a6a6a;">2025/05/20</div>
<div class="t " style="top:454.68px;font-size:8.250px;left:88.47px;width:200px;text-align:center;letter-spacing:.27px;color:#6a6a6a;">14:00:00</div>
<div class="t " style="top:446.99px;font-size:8.250px;left:146.92px;width:200px;text-align:center;letter-spacing:.27px;color:#6a6a6a;">2025/05/21</div>
<div class="t " style="top:454.68px;font-size:8.250px;left:146.16px;width:200px;text-align:center;letter-spacing:.27px;color:#6a6a6a;">10:00:00</div>
<div class="t " style="top:446.99px;font-size:8.250px;left:204.18px;width:200px;text-align:center;letter-spacing:.27px;color:#6a6a6a;">2025/05/22</div>
<div class="t " style="top:454.69px;font-size:8.250px;left:204.08px;width:200px;text-align:center;letter-spacing:.27px;color:#6a6a6a;">06:00:00</div>
<div class="t " style="top:446.99px;font-size:8.250px;left:261.69px;width:200px;text-align:center;letter-spacing:.27px;color:#6a6a6a;">2025/05/23</div>
<div class="t " style="top:454.69px;font-size:8.250px;left:261.78px;width:200px;text-align:center;letter-spacing:.27px;color:#6a6a6a;">02:00:00</div>
<div class="t " style="top:446.99px;font-size:8.250px;left:319.38px;width:200px;text-align:center;letter-spacing:.27px;color:#6a6a6a;">2025/05/23</div>
<div class="t " style="top:454.68px;font-size:8.250px;left:319.47px;width:200px;text-align:center;letter-spacing:.27px;color:#6a6a6a;">22:00:00</div>
<div class="t " style="top:446.99px;font-size:8.250px;left:377.38px;width:200px;text-align:center;letter-spacing:.27px;color:#6a6a6a;">2025/05/24</div>
<div class="t " style="top:454.68px;font-size:8.250px;left:376.93px;width:200px;text-align:center;letter-spacing:.27px;color:#6a6a6a;">18:00:00</div>
<div class="t " style="top:446.99px;font-size:8.250px;left:434.83px;width:200px;text-align:center;letter-spacing:.27px;color:#6a6a6a;">2025/05/25</div>
<div class="t " style="top:454.68px;font-size:8.250px;left:434.62px;width:200px;text-align:center;letter-spacing:.27px;color:#6a6a6a;">14:00:00</div>
<div class="t " style="top:446.99px;font-size:8.250px;left:492.50px;width:200px;text-align:center;letter-spacing:.27px;color:#6a6a6a;">2025/05/26</div>
<div class="t " style="top:454.68px;font-size:8.250px;left:492.32px;width:200px;text-align:center;letter-spacing:.27px;color:#6a6a6a;">10:00:00</div>
<div class="t " style="top:447.00px;font-size:8.250px;left:550.40px;width:200px;text-align:center;letter-spacing:.27px;color:#6a6a6a;">2025/05/27</div>
<div class="t " style="top:454.69px;font-size:8.250px;left:550.24px;width:200px;text-align:center;letter-spacing:.27px;color:#6a6a6a;">06:00:00</div>
<div class="abs" style="left:705.60px;top:208.00px;width:539.00px;height:293.60px;border:0.9px solid #eeeff2;border-radius:5.3px;background:#fff"></div>
<div class="t cj sb" style="top:221.80px;font-size:10.367px;left:719.40px;color:#222;">对话分类统计</div>
<div class="abs" style="left:1075.60px;top:243.10px;width:4.60px;height:4.60px;background:#dcf3e8;border-radius:50%"></div>
<div class="t cj" style="top:236.11px;font-size:7.628px;left:1083.80px;color:#555;">知识库回答</div>
<div class="abs" style="left:1129.40px;top:243.10px;width:4.60px;height:4.60px;background:#dde2fb;border-radius:50%"></div>
<div class="t cj" style="top:236.23px;font-size:7.628px;left:1137.56px;color:#555;">大模型回答</div>
<div class="abs" style="left:1183.60px;top:243.10px;width:4.60px;height:4.60px;background:#fbd9d9;border-radius:50%"></div>
<div class="t cj" style="top:236.28px;font-size:7.628px;left:1191.63px;color:#555;">其他</div>
<div class="t cj" style="top:266.66px;font-size:9.291px;left:726.19px;color:#606060;">校园服务</div>
<div class="abs" style="left:767.20px;top:269.60px;width:365.39px;height:12.60px;background:linear-gradient(90deg,#f6fbf9 0%,#e6f5ee 22%,#e0f4ea 100%)"></div>
<div class="t " style="top:267.35px;font-size:7.950px;left:928.99px;width:200px;text-align:right;color:#333;">81</div>
<div class="abs" style="left:1132.59px;top:269.60px;width:27.07px;height:12.60px;background:linear-gradient(90deg,#e8ebfd,#dde1fb)"></div>
<div class="t " style="top:267.35px;font-size:7.950px;left:955.11px;width:200px;text-align:right;color:#333;">6</div>
<div class="t cj" style="top:315.34px;font-size:9.291px;left:726.19px;color:#606060;">校园生活</div>
<div class="abs" style="left:767.20px;top:318.30px;width:76.69px;height:12.60px;background:linear-gradient(90deg,#f6fbf9 0%,#e6f5ee 22%,#e0f4ea 100%)"></div>
<div class="t " style="top:316.09px;font-size:7.950px;left:639.88px;width:200px;text-align:right;color:#333;">17</div>
<div class="abs" style="left:843.89px;top:318.30px;width:4.51px;height:12.60px;background:linear-gradient(90deg,#e8ebfd,#dde1fb)"></div>
<div class="t " style="top:316.03px;font-size:7.950px;left:644.80px;width:200px;text-align:right;color:#333;">1</div>
<div class="abs" style="left:848.40px;top:318.30px;width:4.51px;height:12.60px;background:linear-gradient(90deg,#fbe3e3,#fad7d7)"></div>
<div class="t " style="top:316.03px;font-size:7.950px;left:649.31px;width:200px;text-align:right;color:#333;">1</div>
<div class="t cj" style="top:364.00px;font-size:9.291px;left:725.96px;color:#606060;">学校事务</div>
<div class="abs" style="left:767.20px;top:367.00px;width:67.67px;height:12.60px;background:linear-gradient(90deg,#f6fbf9 0%,#e6f5ee 22%,#e0f4ea 100%)"></div>
<div class="t " style="top:364.77px;font-size:7.950px;left:630.26px;width:200px;text-align:right;color:#333;">15</div>
<div class="t cj" style="top:412.70px;font-size:9.291px;left:725.96px;color:#606060;">学术事务</div>
<div class="abs" style="left:767.20px;top:415.65px;width:58.64px;height:12.60px;background:linear-gradient(90deg,#f6fbf9 0%,#e6f5ee 22%,#e0f4ea 100%)"></div>
<div class="t " style="top:413.40px;font-size:7.950px;left:621.24px;width:200px;text-align:right;color:#333;">13</div>
<div class="t cj" style="top:461.31px;font-size:9.291px;left:725.96px;color:#606060;">学校信息</div>
<div class="abs" style="left:767.20px;top:464.30px;width:45.11px;height:12.60px;background:linear-gradient(90deg,#f6fbf9 0%,#e6f5ee 22%,#e0f4ea 100%)"></div>
<div class="t " style="top:462.05px;font-size:7.950px;left:607.71px;width:200px;text-align:right;color:#333;">10</div>
<div class="abs" style="left:812.31px;top:464.30px;width:13.53px;height:12.60px;background:linear-gradient(90deg,#e8ebfd,#dde1fb)"></div>
<div class="t " style="top:462.07px;font-size:7.950px;left:621.24px;width:200px;text-align:right;color:#333;">3</div>
<div class="abs" style="left:154.2px;top:514.2px;width:263.6px;height:111px;border:0.9px solid #eeeff2;border-bottom:none;border-radius:5.3px 5.3px 0 0;background:#fff;overflow:hidden"><div class="abs" style="left:0;top:0;width:263.6px;height:73.4px;background:linear-gradient(155deg,#e6e9fc 0%,#e6e9fccc 12%,#ffffff 62%)"></div><div class="abs" style="left:0;top:40px;width:263.6px;height:33.6px;background:linear-gradient(180deg,rgba(255,255,255,0),#fff)"></div></div>
<div class="t cj sb" style="top:527.20px;font-size:10.367px;left:167.50px;color:#222;">校园服务</div>
<div class="t cj" style="top:562.37px;font-size:9.071px;left:182.67px;color:#333;">最新提问时间</div>
<div class="t cj" style="top:562.40px;font-size:9.071px;left:215.09px;width:200px;text-align:center;color:#333;">次数</div>
<div class="t cj" style="top:562.43px;font-size:9.071px;left:274.56px;width:200px;text-align:center;color:#333;">提问账号</div>
<div class="abs" style="left:167.70px;top:587.30px;width:236.10px;height:0.80px;background:#edeff3"></div>
<div class="abs" style="left:167.40px;top:599.40px;width:11.30px;height:11.30px;background:#fde9e9;border-radius:50%"></div>
<div class="t " style="top:595.61px;font-size:9.600px;left:73.29px;width:200px;text-align:center;color:#ec4a44;">1</div>
<div class="t " style="top:595.43px;font-size:9.300px;left:186.06px;letter-spacing:.25px;-webkit-text-stroke:.1px currentColor;color:#222;">2025-05-26 21:12:45</div>
<div class="t cj" style="top:595.18px;font-size:9.071px;left:215.20px;width:200px;text-align:center;letter-spacing:.2px;color:#4c6cec;">20</div>
<div class="t cj" style="top:595.25px;font-size:9.071px;left:344.69px;width:58.8px;overflow:hidden;letter-spacing:.2px;color:#333;">zc2024541009</div>
<div class="abs" style="left:167.70px;top:621.20px;width:236.10px;height:0.80px;background:#edeff3"></div>
<div class="abs" style="left:430.0px;top:514.2px;width:263.6px;height:111px;border:0.9px solid #eeeff2;border-bottom:none;border-radius:5.3px 5.3px 0 0;background:#fff;overflow:hidden"><div class="abs" style="left:0;top:0;width:263.6px;height:73.4px;background:linear-gradient(155deg,#d4f2e2 0%,#d4f2e2cc 12%,#ffffff 62%)"></div><div class="abs" style="left:0;top:40px;width:263.6px;height:33.6px;background:linear-gradient(180deg,rgba(255,255,255,0),#fff)"></div></div>
<div class="t cj sb" style="top:527.21px;font-size:10.367px;left:443.30px;color:#222;">校园生活</div>
<div class="t cj" style="top:562.37px;font-size:9.071px;left:458.47px;color:#333;">最新提问时间</div>
<div class="t cj" style="top:562.40px;font-size:9.071px;left:490.89px;width:200px;text-align:center;color:#333;">次数</div>
<div class="t cj" style="top:562.43px;font-size:9.071px;left:550.36px;width:200px;text-align:center;color:#333;">提问账号</div>
<div class="abs" style="left:443.50px;top:587.30px;width:236.10px;height:0.80px;background:#edeff3"></div>
<div class="abs" style="left:443.20px;top:599.40px;width:11.30px;height:11.30px;background:#fde9e9;border-radius:50%"></div>
<div class="t " style="top:595.61px;font-size:9.600px;left:349.09px;width:200px;text-align:center;color:#ec4a44;">1</div>
<div class="t " style="top:595.42px;font-size:9.300px;left:461.86px;letter-spacing:.25px;-webkit-text-stroke:.1px currentColor;color:#222;">2025-05-26 15:06:00</div>
<div class="t cj" style="top:595.24px;font-size:9.071px;left:491.00px;width:200px;text-align:center;letter-spacing:.2px;color:#4c6cec;">6</div>
<div class="t cj" style="top:595.25px;font-size:9.071px;left:620.49px;width:58.8px;overflow:hidden;letter-spacing:.2px;color:#333;">zc2024541009</div>
<div class="abs" style="left:443.50px;top:621.20px;width:236.10px;height:0.80px;background:#edeff3"></div>
<div class="abs" style="left:705.7px;top:514.2px;width:263.6px;height:111px;border:0.9px solid #eeeff2;border-bottom:none;border-radius:5.3px 5.3px 0 0;background:#fff;overflow:hidden"><div class="abs" style="left:0;top:0;width:263.6px;height:73.4px;background:linear-gradient(155deg,#d9e9fb 0%,#d9e9fbcc 12%,#ffffff 62%)"></div><div class="abs" style="left:0;top:40px;width:263.6px;height:33.6px;background:linear-gradient(180deg,rgba(255,255,255,0),#fff)"></div></div>
<div class="t cj sb" style="top:527.20px;font-size:10.367px;left:718.94px;color:#222;">学校事务</div>
<div class="t cj" style="top:562.37px;font-size:9.071px;left:734.17px;color:#333;">最新提问时间</div>
<div class="t cj" style="top:562.40px;font-size:9.071px;left:766.59px;width:200px;text-align:center;color:#333;">次数</div>
<div class="t cj" style="top:562.43px;font-size:9.071px;left:826.06px;width:200px;text-align:center;color:#333;">提问账号</div>
<div class="abs" style="left:719.20px;top:587.30px;width:236.10px;height:0.80px;background:#edeff3"></div>
<div class="abs" style="left:718.90px;top:599.40px;width:11.30px;height:11.30px;background:#fde9e9;border-radius:50%"></div>
<div class="t " style="top:595.61px;font-size:9.600px;left:624.79px;width:200px;text-align:center;color:#ec4a44;">1</div>
<div class="t " style="top:595.41px;font-size:9.300px;left:737.56px;letter-spacing:.25px;-webkit-text-stroke:.1px currentColor;color:#222;">2025-05-24 00:31:09</div>
<div class="t cj" style="top:595.29px;font-size:9.071px;left:766.70px;width:200px;text-align:center;letter-spacing:.2px;color:#4c6cec;">4</div>
<div class="t cj" style="top:595.28px;font-size:9.071px;left:896.19px;width:58.8px;overflow:hidden;letter-spacing:.2px;color:#333;">zc2024070130</div>
<div class="abs" style="left:719.20px;top:621.20px;width:236.10px;height:0.80px;background:#edeff3"></div>
<div class="abs" style="left:981.5px;top:514.2px;width:263.6px;height:111px;border:0.9px solid #eeeff2;border-bottom:none;border-radius:5.3px 5.3px 0 0;background:#fff;overflow:hidden"><div class="abs" style="left:0;top:0;width:263.6px;height:73.4px;background:linear-gradient(155deg,#fdf0d9 0%,#fdf0d9cc 12%,#ffffff 62%)"></div><div class="abs" style="left:0;top:40px;width:263.6px;height:33.6px;background:linear-gradient(180deg,rgba(255,255,255,0),#fff)"></div></div>
<div class="t cj sb" style="top:527.22px;font-size:10.367px;left:994.74px;color:#222;">学术事务</div>
<div class="t cj" style="top:562.37px;font-size:9.071px;left:1009.97px;color:#333;">最新提问时间</div>
<div class="t cj" style="top:562.40px;font-size:9.071px;left:1042.39px;width:200px;text-align:center;color:#333;">次数</div>
<div class="t cj" style="top:562.43px;font-size:9.071px;left:1101.86px;width:200px;text-align:center;color:#333;">提问账号</div>
<div class="abs" style="left:995.00px;top:587.30px;width:236.10px;height:0.80px;background:#edeff3"></div>
<div class="abs" style="left:994.70px;top:599.40px;width:11.30px;height:11.30px;background:#fde9e9;border-radius:50%"></div>
<div class="t " style="top:595.61px;font-size:9.600px;left:900.59px;width:200px;text-align:center;color:#ec4a44;">1</div>
<div class="t " style="top:595.43px;font-size:9.300px;left:1013.36px;letter-spacing:.25px;-webkit-text-stroke:.1px currentColor;color:#222;">2025-05-25 10:33:05</div>
<div class="t cj" style="top:595.29px;font-size:9.071px;left:1042.50px;width:200px;text-align:center;letter-spacing:.2px;color:#4c6cec;">4</div>
<div class="t cj" style="top:595.18px;font-size:9.071px;left:1171.99px;width:58.8px;overflow:hidden;letter-spacing:.2px;color:#333;">zc2024180130</div>
<div class="abs" style="left:995.00px;top:621.20px;width:236.10px;height:0.80px;background:#edeff3"></div>
<div class="abs" style="left:1257.20px;top:53.60px;width:3.80px;height:415.60px;background:#dddee2;border-radius:2px"></div>
<div class="abs" style="left:0;top:0;width:1272px;height:1.9px;background:#d7d7d7"></div><div class="abs" style="left:0;top:0;width:1.9px;height:635px;background:#d7d7d7"></div><div class="abs" style="left:1269.1px;top:0;width:1.9px;height:634px;background:#d7d7d7"></div><div class="abs" style="left:0;top:632.1px;width:1271px;height:1.9px;background:#d7d7d7"></div><div class="abs" style="left:1271px;top:0;width:1px;height:635px;background:#fff"></div><div class="abs" style="left:0;top:634px;width:1272px;height:1px;background:#fff"></div>
</div>
</body></html>
